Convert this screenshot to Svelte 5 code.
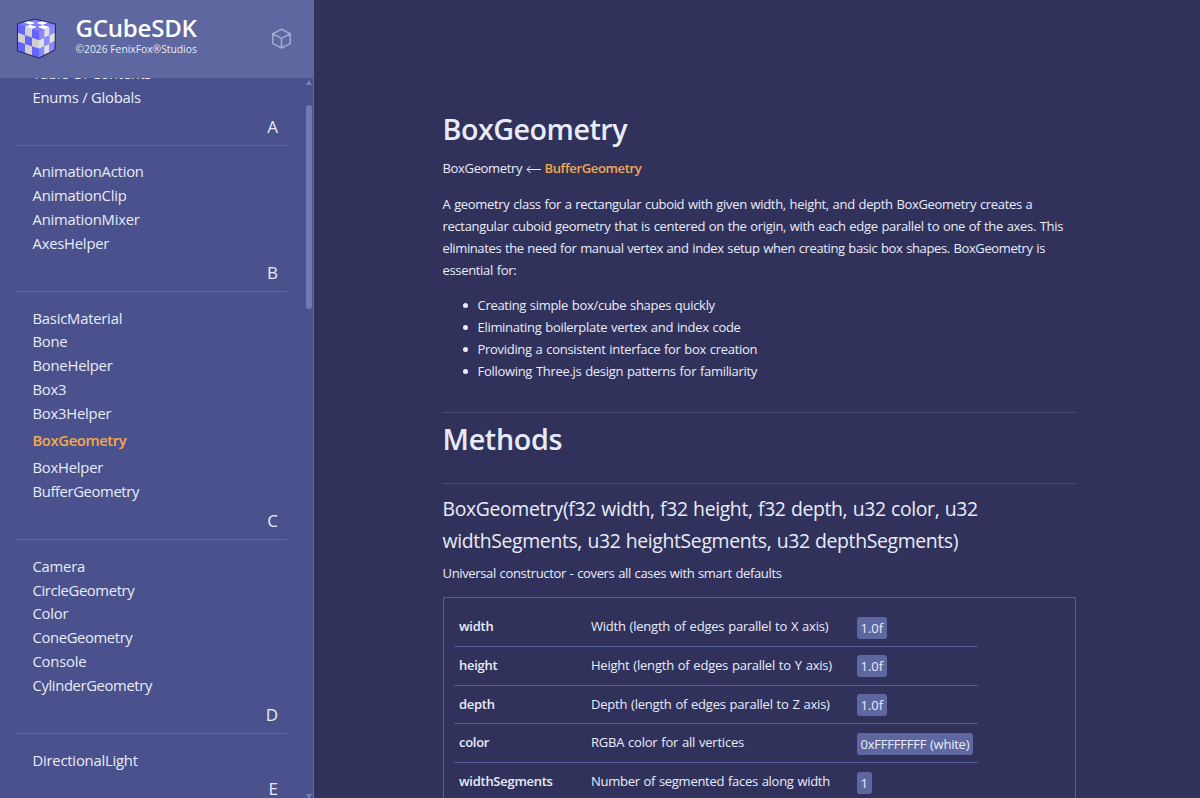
<script>
  const sections = [
    { items: ['Table Of Contents', 'Enums / Globals'], next: 'A' },
    { items: ['AnimationAction', 'AnimationClip', 'AnimationMixer', 'AxesHelper'], next: 'B' },
    { items: ['BasicMaterial', 'Bone', 'BoneHelper', 'Box3', 'Box3Helper', 'BoxGeometry', 'BoxHelper', 'BufferGeometry'], next: 'C' },
    { items: ['Camera', 'CircleGeometry', 'Color', 'ConeGeometry', 'Console', 'CylinderGeometry'], next: 'D' },
    { items: ['DirectionalLight'], next: 'E' },
  ];
  const active = 'BoxGeometry';
  const summary = [
    'A geometry class for a rectangular cuboid with given width, height, and depth BoxGeometry creates a',
    'rectangular cuboid geometry that is centered on the origin, with each edge parallel to one of the axes. This',
    'eliminates the need for manual vertex and index setup when creating basic box shapes. BoxGeometry is',
    'essential for:',
  ];
  const uses = [
    'Creating simple box/cube shapes quickly',
    'Eliminating boilerplate vertex and index code',
    'Providing a consistent interface for box creation',
    'Following Three.js design patterns for familiarity',
  ];
  const params = [
    ['width', 'Width (length of edges parallel to X axis)', '1.0f'],
    ['height', 'Height (length of edges parallel to Y axis)', '1.0f'],
    ['depth', 'Depth (length of edges parallel to Z axis)', '1.0f'],
    ['color', 'RGBA color for all vertices', '0xFFFFFFFF (white)'],
    ['widthSegments', 'Number of segmented faces along width', '1'],
  ];
  // Cube faces as four corners each; every face is split into 3 x 3 checkers.
  const faces = [
    { q: [[18, 24], [39, 31.5], [39, 57.5], [18, 50.5]], a: '#6664ff', b: '#d0d0d0' },
    { q: [[39, 31.5], [55, 24.5], [54.5, 49.5], [39, 57.5]], a: '#8a88ff', b: '#e0e0e0' },
    { q: [[18, 24], [35, 19.5], [55, 24.5], [39, 31.5]], a: '#7e7cff', b: '#ffffff' },
  ];
  const cells = faces.flatMap(({ q, a, b }) => {
    const p = (i, j) => {
      const s = i / 3, t = j / 3;
      return [0, 1].map((k) =>
        (q[0][k] * (1 - s) * (1 - t) + q[1][k] * s * (1 - t) + q[2][k] * s * t + q[3][k] * (1 - s) * t).toFixed(2)
      ).join(',');
    };
    const out = [];
    for (let i = 0; i < 3; i++)
      for (let j = 0; j < 3; j++)
        out.push({ pts: [p(i, j), p(i + 1, j), p(i + 1, j + 1), p(i, j + 1)].join(' '), fill: (i + j) % 2 ? b : a });
    return out;
  });
</script>

<div class="page">
  <aside>
    <header>
      <svg class="logo" width="48" height="48" viewBox="12 15 48 48">
        <polygon points="18,24 35,19.5 55,24.5 54.5,49.5 39,57.5 18,50.5" fill="#6664ff" stroke="#292b55" stroke-width="2.2" stroke-linejoin="round" />
        {#each cells as c}<polygon points={c.pts} fill={c.fill} />{/each}
      </svg>
      <div class="brand">
        <strong>GCubeSDK</strong>
        <small>©2026 FenixFox®Studios</small>
      </div>
      <svg class="cube" width="22" height="22" viewBox="0 0 22 22" fill="none" stroke="#a1a7d2" stroke-width="1.6" stroke-linejoin="round">
        <path d="M10.5 1.3 19.2 5.8v9.8L10.5 20 1.8 15.6V5.8z M1.8 5.8 10.5 10.4 19.2 5.8 M10.5 10.4V20" />
      </svg>
    </header>
    <div class="scroller">
      <nav>
        {#each sections as s}
          <ul>
            {#each s.items as item}<li class:active={item === active} class:geo={item.endsWith('Geometry')}>{item}</li>{/each}
          </ul>
          <h4>{s.next}</h4>
        {/each}
      </nav>
      <div class="bar">
        <svg width="6" height="5"><path d="M3 0 6 5H0z" fill="#7780b9" /></svg>
        <div class="track"><i></i></div>
        <svg width="6" height="4"><path d="M0 0H6L3 5z" fill="#7780b9" /></svg>
      </div>
    </div>
  </aside>
  <main>
    <h1>BoxGeometry</h1>
    <p class="chain"><span>BoxGeometry</span><svg width="15" height="9" viewBox="0 0 15 9" fill="none" stroke="#e6eaf8"><path d="M4.5 1 1 4.5 4.5 8M1 4.5H15" /></svg><b>BufferGeometry</b></p>
    <p class="summary">{#each summary as line}<span>{line}</span>{/each}</p>
    <ul class="uses">{#each uses as u}<li>{u}</li>{/each}</ul>
    <h2>Methods</h2>
    <section>
      <h3><span>BoxGeometry(f32 width, f32 height, f32 depth, u32 color, u32</span><span>widthSegments, u32 heightSegments, u32 depthSegments)</span></h3>
      <p class="lead">Universal constructor - covers all cases with smart defaults</p>
      <div class="box">
        <div class="table">
          {#each params as [name, text, value]}
            <div class="row"><b>{name}</b><span>{text}</span><code>{value}</code></div>
          {/each}
        </div>
      </div>
    </section>
  </main>
</div>

<style>
  :global(body) { margin: 0; background: #31325c; overflow: hidden; }
  .page { display: flex; height: 798px; overflow: hidden; color: #e8ecf8; font-family: "Open Sans", "Noto Sans", sans-serif; background: #31325c; }
  ul, h1, h2, h3, h4, p { margin: 0; padding: 0; list-style: none; font-weight: 400; }
  aside { width: 313px; flex: none; background: #4a518c; border-right: 1px solid #5f68a0; display: flex; flex-direction: column; }
  header { height: 78px; flex: none; background: #5e679f; display: flex; align-items: center; box-sizing: border-box; padding-left: 12px; width: 314px; }
  .logo { flex: none; }
  .brand { margin: -8px 0 0 15.5px; width: 195.5px; display: flex; flex-direction: column; white-space: nowrap; }
  .brand strong { font-size: 24px; line-height: 27px; font-weight: 600; color: #fff; letter-spacing: -0.2px; }
  .brand small { font-size: 10.3px; line-height: 14px; margin-top: 1px; }
  .scroller { flex: 1; min-height: 0; display: flex; overflow: hidden; }
  nav { width: 272px; margin: -16px 18px 0 15px; flex: none; }
  nav li { height: 23.8px; line-height: 23.8px; padding-left: 17.5px; font-size: 14.8px; letter-spacing: -0.22px; white-space: nowrap; }
  nav li.geo { letter-spacing: -0.37px; }
  nav ul:first-child li:first-child { line-height: 22px; letter-spacing: -0.3px; }
  nav li.active { padding-top: 3.5px; padding-bottom: 3.5px; color: #f4a94c; font-weight: 600; letter-spacing: -0.38px; }
  h4 { height: 35.1px; line-height: 34px; border-bottom: 1px solid #5e67a0; margin-bottom: 14.8px; text-align: right; padding-right: 9px; font-size: 17px; }
  .bar { width: 6px; margin-left: 1px; display: flex; flex-direction: column; padding-top: 2px; }
  .track { flex: 1; padding-top: 20px; }
  .track i { display: block; height: 204px; border-radius: 3px; background: #7078b3; }
  .bar svg { flex: none; }
  main { width: 633px; padding: 109px 0 0 128.5px; font-size: 13px; line-height: 22px; letter-spacing: -0.33px; word-spacing: 0.7px; white-space: nowrap; }
  h1, h2 { font-size: 28.7px; line-height: 40px; font-weight: 600; }
  h1 { margin-top: -0.5px; letter-spacing: -0.5px; }
  .chain { margin-top: 8.5px; display: flex; align-items: center; }
  .chain b { color: #f4a94c; font-weight: 600; letter-spacing: -0.36px; }
  .chain span { width: 83px; }
  .chain svg { margin: 2px 4px 0 0; }
  .summary { margin-top: 14px; }
  .summary span, h3 span { display: block; }
  .summary span:nth-child(3) { letter-spacing: -0.38px; }
  .uses { margin-top: 13px; letter-spacing: -0.3px; }
  .uses li { padding-left: 35px; position: relative; }
  .uses li::before { content: ""; position: absolute; left: 20px; top: 9px; width: 5px; height: 5px; border-radius: 50%; background: #e8ecf8; }
  h2 { margin-top: 30px; padding-top: 6px; border-top: 1px dotted #5e67a0; letter-spacing: -0.3px; }
  section { margin-top: 24px; border-top: 1px dotted #5e67a0; padding-top: 9px; }
  h3 { font-size: 19.4px; line-height: 31.7px; letter-spacing: -0.36px; }
  .lead { margin-top: 6px; letter-spacing: -0.35px; }
  .box { margin-top: 13px; height: 240px; border: 1px solid #555e97; padding: 10px; }
  .table { width: 524px; }
  .row { display: grid; grid-template-columns: 132px 266px auto; height: 37.7px; border-bottom: 1px solid #555e97; padding-left: 5px; align-items: center; justify-items: start; letter-spacing: -0.22px; }
  .row b { font-weight: 600; letter-spacing: -0.27px; }
  .row b, .row span { margin-top: -2px; padding-left: 0.5px; }
  .row:last-child span { letter-spacing: -0.28px; }
  .row code { font-family: inherit; background: #5e679f; border-radius: 3px; height: 22px; line-height: 22px; padding: 0 4px; margin-top: 1px; letter-spacing: -0.23px; font-size: 13px; }
  .row:not(:nth-child(4)) code { letter-spacing: 0; }
</style>
